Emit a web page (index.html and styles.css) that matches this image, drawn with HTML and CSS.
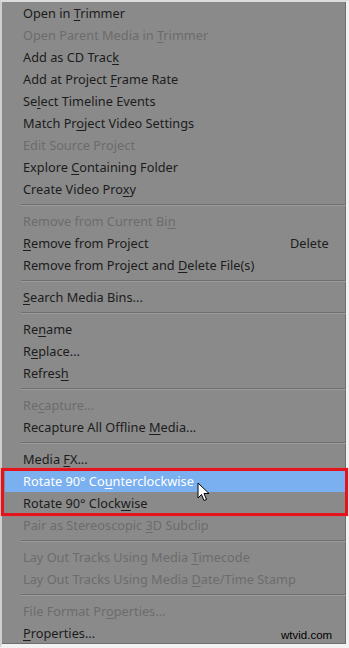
FILE: index.html
```html
<!DOCTYPE html>
<html>
<head>
<meta charset="utf-8">
<link rel="stylesheet" href="styles.css">
</head>
<body>
<div class="menu">
  <div class="item">Open in <u>T</u>rimmer</div>
  <div class="item dis">Open Parent Media in <u>T</u>rimmer</div>
  <div class="item">Add as CD Trac<u>k</u></div>
  <div class="item">Add at Project <u>F</u>rame Rate</div>
  <div class="item">Se<u>l</u>ect Timeline Events</div>
  <div class="item">Match Pr<u>o</u>ject Video Settings</div>
  <div class="item dis">Edit Source Project</div>
  <div class="item">Explore <u>C</u>ontaining Folder</div>
  <div class="item">Create Video Pro<u>x</u>y</div>
  <div class="sep"></div>
  <div class="item dis">Remove from Current Bi<u>n</u></div>
  <div class="item split"><span class="label"><u>R</u>emove from Project</span><span class="key">Delete</span></div>
  <div class="item">Remove from Project and <u>D</u>elete File(s)</div>
  <div class="sep"></div>
  <div class="item"><u>S</u>earch Media Bins...</div>
  <div class="sep"></div>
  <div class="item">Re<u>n</u>ame</div>
  <div class="item">R<u>e</u>place...</div>
  <div class="item">Refres<u>h</u></div>
  <div class="sep"></div>
  <div class="item dis">Re<u>c</u>apture...</div>
  <div class="item">Recapture All Offline <u>M</u>edia...</div>
  <div class="sep"></div>
  <div class="item">Media <u>F</u>X...</div>
  <div class="group">
    <div class="item hl">Rotate 90° Co<u>u</u>nterclockwise</div>
    <div class="item">Rotate 90° Clock<u>w</u>ise</div>
    <div class="box"></div>
    <svg class="cursor" width="13" height="20" viewBox="0 0 13 20">
      <path d="M1 1 L1 16 L4.5 12.5 L7 18.5 L9.5 17.5 L7 11.5 L12 11.5 Z" fill="#fff" stroke="#000" stroke-width="1" stroke-linejoin="miter"/>
    </svg>
  </div>
  <div class="item dis">Pair as Stereoscopic <u>3</u>D Subclip</div>
  <div class="sep"></div>
  <div class="item dis">Lay Out Tracks Using Media <u>T</u>imecode</div>
  <div class="item dis">Lay Out Tracks Using Media <u>D</u>ate/Time Stamp</div>
  <div class="sep"></div>
  <div class="item dis">File Format Pr<u>o</u>perties...</div>
  <div class="item"><u>P</u>roperties...</div>
  <div class="mark">wtvid.com</div>
</div>
</body>
</html>
```
FILE: styles.css
```css
html, body {
  margin: 0;
  padding: 0;
  background: #f4f4f4;
}
.menu {
  position: relative;
  box-sizing: border-box;
  width: 349px;
  height: 648px;
  background: #8a8a8a;
  border-top: 2px solid #dcdcdc;
  border-left: 2px solid #cfcfcf;
  border-right: 3px solid #f2f2f2;
  border-bottom: 4px solid #f2f2f2;
  box-shadow: inset -1px -1px 0 #6e6e6e;
  font-family: "Noto Sans", "DejaVu Sans", sans-serif;
  font-size: 12.75px;
  color: #1c1c1c;
}
.item {
  height: 22px;
  line-height: 22px;
  padding-left: 21px;
  white-space: nowrap;
}
.item.split {
  display: flex;
}
.item u {
  text-decoration: underline;
  text-underline-offset: 2px;
}
.item.dis {
  color: #6c6c6c;
}
.label {
  flex: 1;
}
.key {
  width: 56px;
}
.sep {
  height: 10px;
  box-sizing: border-box;
  margin-left: 19px;
  padding-top: 4px;
}
.sep::before {
  content: "";
  display: block;
  height: 1px;
  background: #707070;
  border-bottom: 1px solid #9a9a9a;
}
.group {
  position: relative;
}
.item.hl {
  background: #7ab0ef;
  color: #ffffff;
  margin-left: 3px;
  margin-right: 1px;
  padding-left: 18px;
}
.box {
  position: absolute;
  left: -1px;
  right: -2px;
  top: -2px;
  bottom: -2px;
  border: 3px solid #e3141c;
  box-shadow: 0 0 1px #ff5060;
}
.cursor {
  position: absolute;
  left: 195px;
  top: 12px;
}
.mark {
  position: absolute;
  left: 279px;
  bottom: 3px;
  font-family: "Liberation Sans", Arial, sans-serif;
  font-size: 11.5px;
  color: #000;
}
```
